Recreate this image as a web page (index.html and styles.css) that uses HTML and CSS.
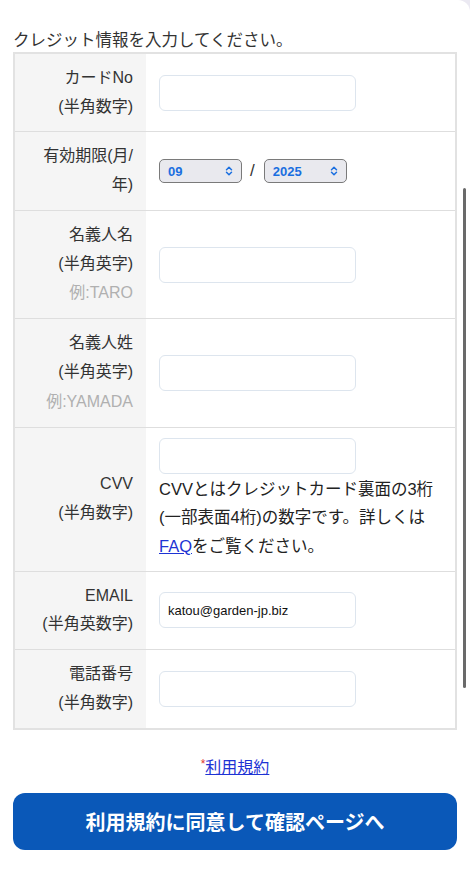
FILE: index.html
```html
<!DOCTYPE html>
<html lang="ja">
<head>
<meta charset="utf-8">
<title>クレジット情報</title>
<link rel="stylesheet" href="styles.css">
</head>
<body>
<div class="sheet">
  <p class="intro">クレジット情報を入力してください。</p>
  <div class="form">
    <div class="row">
      <div class="label"><span>カードNo</span><span>(半角数字)</span></div>
      <div class="field"><input class="text" type="text"></div>
    </div>
    <div class="row">
      <div class="label"><span>有効期限(月/年)</span></div>
      <div class="field">
        <div class="expiry">
          <span class="select-wrap">
            <select class="select"><option>09</option></select>
            <svg class="chev" viewBox="0 0 8 10" width="8" height="10"><path d="M1.5 3.8 L4 1.3 L6.5 3.8 M1.5 6.2 L4 8.7 L6.5 6.2" fill="none" stroke="#1a6fe0" stroke-width="1.5" stroke-linecap="round" stroke-linejoin="round"/></svg>
          </span>
          <span class="slash">/</span>
          <span class="select-wrap">
            <select class="select"><option>2025</option></select>
            <svg class="chev" viewBox="0 0 8 10" width="8" height="10"><path d="M1.5 3.8 L4 1.3 L6.5 3.8 M1.5 6.2 L4 8.7 L6.5 6.2" fill="none" stroke="#1a6fe0" stroke-width="1.5" stroke-linecap="round" stroke-linejoin="round"/></svg>
          </span>
        </div>
      </div>
    </div>
    <div class="row">
      <div class="label"><span>名義人名</span><span>(半角英字)</span><span class="hint">例:TARO</span></div>
      <div class="field"><input class="text" type="text"></div>
    </div>
    <div class="row">
      <div class="label"><span>名義人姓</span><span>(半角英字)</span><span class="hint">例:YAMADA</span></div>
      <div class="field"><input class="text" type="text"></div>
    </div>
    <div class="row">
      <div class="label"><span>CVV</span><span>(半角数字)</span></div>
      <div class="field">
        <input class="text" type="text">
        <p class="note">CVVとはクレジットカード裏面の3桁(一部表面4桁)の数字です。詳しくは<a href="#">FAQ</a>をご覧ください。</p>
      </div>
    </div>
    <div class="row">
      <div class="label"><span>EMAIL</span><span>(半角英数字)</span></div>
      <div class="field"><input class="text" type="text" value="katou@garden-jp.biz"></div>
    </div>
    <div class="row">
      <div class="label"><span>電話番号</span><span>(半角数字)</span></div>
      <div class="field"><input class="text" type="text"></div>
    </div>
  </div>
  <p class="terms"><span class="req">*</span><a href="#">利用規約</a></p>
  <button class="submit" type="button">利用規約に同意して確認ページへ</button>
</div>
<div class="scrollbar"></div>
</body>
</html>
```
FILE: styles.css
```css
html {
  background: #ebe9f2;
}
body {
  margin: 0;
  font-family: "Liberation Sans", "Noto Sans CJK JP", sans-serif;
  color: #333;
  font-size: 16px;
}
.sheet {
  background: #fff;
  border-top-right-radius: 12px;
  padding: 28px 13px 21px;
  min-height: 871px;
  box-sizing: border-box;
}
.intro {
  margin: 0;
  line-height: 24px;
  font-size: 16.5px;
  color: #333;
}
.form {
  border: 2px solid #e2e2e2;
}
.row {
  display: grid;
  grid-template-columns: 131px 1fr;
}
.row + .row {
  border-top: 1px solid #dedede;
}
.label {
  background: #f5f5f5;
  padding: 10px 13px;
  display: flex;
  flex-direction: column;
  justify-content: center;
  text-align: right;
  line-height: 28.7px;
}
.hint {
  color: #b0b0b0;
  line-height: 30px;
}
.field {
  padding: 10px 13px;
  display: flex;
  flex-direction: column;
  justify-content: center;
  align-items: flex-start;
}
.text {
  width: 197px;
  height: 36px;
  box-sizing: border-box;
  border: 1px solid #dde5ee;
  border-radius: 6px;
  background: #fff;
  padding: 0 8px;
  font-family: "Liberation Sans", "Noto Sans CJK JP", sans-serif;
  font-size: 13px;
  color: #111;
  margin: 0;
}
.expiry {
  display: flex;
  align-items: center;
}
.select-wrap {
  position: relative;
  display: inline-block;
}
.select {
  appearance: none;
  -webkit-appearance: none;
  width: 83px;
  height: 24px;
  box-sizing: border-box;
  border: 1px solid #7a7a7a;
  border-radius: 5px;
  background: #e9e9ee;
  color: #1a6fe0;
  font-family: "Liberation Sans", "Noto Sans CJK JP", sans-serif;
  font-size: 13px;
  font-weight: bold;
  padding: 0 0 0 8px;
  margin: 0;
  display: block;
}
.chev {
  position: absolute;
  right: 9px;
  top: 7px;
}
.slash {
  margin: 0 9px 0 8px;
  font-size: 17px;
  color: #333;
}
.note {
  margin: 1px 0 0;
  line-height: 28.7px;
  color: #222;
  font-size: 16.5px;
}
a {
  color: #1d33d4;
}
.terms {
  margin: 26px 0 0;
  text-align: center;
  line-height: 24px;
}
.req {
  color: #e0332e;
  font-size: 12px;
  vertical-align: top;
  line-height: 16px;
}
.submit {
  display: block;
  width: 100%;
  height: 57px;
  margin-top: 13px;
  border: none;
  border-radius: 12px;
  background: #0a58b8;
  color: #fff;
  font-family: "Liberation Sans", "Noto Sans CJK JP", sans-serif;
  font-size: 20px;
  font-weight: bold;
}
.scrollbar {
  position: fixed;
  right: 4px;
  top: 188px;
  width: 3px;
  height: 500px;
  border-radius: 2px;
  background: #6a6a6a;
}
```
